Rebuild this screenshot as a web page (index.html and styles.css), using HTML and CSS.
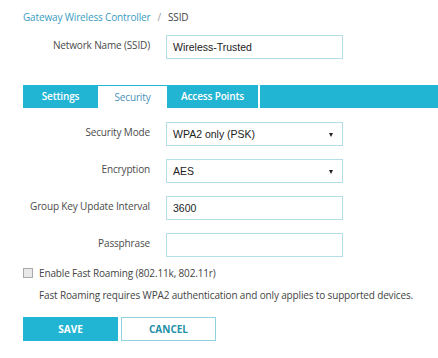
FILE: index.html
```html
<!DOCTYPE html>
<html>
<head>
<meta charset="utf-8">
<link rel="stylesheet" href="styles.css">
</head>
<body>
<div class="page">
  <div class="crumbs"><a class="crumb-link">Gateway Wireless Controller</a><span class="sep">/</span><span class="crumb-cur">SSID</span></div>
  <div class="row first">
    <label class="lbl">Network Name (SSID)</label>
    <div class="field">Wireless-Trusted</div>
  </div>
  <div class="tabs">
    <div class="tab">Settings</div>
    <div class="tab active">Security</div>
    <div class="tab">Access Points</div>
    <div class="tab-fill"></div>
  </div>
  <div class="rows">
    <div class="row">
      <label class="lbl">Security Mode</label>
      <div class="field select">WPA2 only (PSK)<span class="caret"></span></div>
    </div>
    <div class="row">
      <label class="lbl">Encryption</label>
      <div class="field select">AES<span class="caret"></span></div>
    </div>
    <div class="row">
      <label class="lbl">Group Key Update Interval</label>
      <div class="field">3600</div>
    </div>
    <div class="row">
      <label class="lbl">Passphrase</label>
      <div class="field"></div>
    </div>
  </div>
  <div class="check">
    <span class="box"></span>
    <span>Enable Fast Roaming (802.11k, 802.11r)</span>
  </div>
  <div class="note">Fast Roaming requires WPA2 authentication and only applies to supported devices.</div>
  <div class="buttons">
    <div class="btn save">SAVE</div>
    <div class="btn cancel">CANCEL</div>
  </div>
</div>
</body>
</html>
```
FILE: styles.css
```css
html, body { margin: 0; padding: 0; background: #fff; }
body { font-family: "Open Sans", "Noto Sans", sans-serif; font-size: 10px; letter-spacing: -0.15px; color: #444; }
.page { padding: 9px 0 0 23px; }
.crumbs { height: 16px; line-height: 16px; }
.crumb-link { color: #3a9cc0; }
.sep { color: #999; margin: 0 7px; }
.crumb-cur { color: #444; }
.row { display: flex; align-items: center; height: 24px; }
.row.first { margin-top: 10px; }
.lbl { width: 127px; text-align: right; margin-right: 16px; color: #4a4a4a; line-height: 16px; margin-top: -4px; white-space: nowrap; }
.field { box-sizing: border-box; width: 177px; height: 24px; border: 1px solid #b4dee6; font-family: "Liberation Sans", Arial, sans-serif; font-size: 10.5px; letter-spacing: 0; color: #222; padding-left: 6px; line-height: 22px; position: relative; }
.caret { position: absolute; right: 9px; top: 10px; width: 0; height: 0; border-left: 2.5px solid transparent; border-right: 2.5px solid transparent; border-top: 4px solid #222; }
.tabs { display: flex; height: 23px; margin-top: 26px; }
.tab { background: #22b4d3; color: #fff; font-weight: 600; line-height: 23px; text-align: center; }
.tab:nth-child(1) { width: 75px; }
.tab:nth-child(2) { width: 69px; }
.tab:nth-child(3) { width: 91px; margin-right: 2px; }
.tab.active { background: #fff; color: #4a90b8; font-weight: 400; border-top: 1px solid #22b4d3; line-height: 22px; box-sizing: border-box; }
.tab-fill { flex: 1; background: #22b4d3; }
.rows { margin-top: 14px; display: flex; flex-direction: column; gap: 13px; }
.check { display: flex; align-items: center; margin-top: 9px; height: 14px; color: #444; }
.box { box-sizing: border-box; width: 10px; height: 10px; border: 1px solid #aaa; background: #e8e8e8; margin-right: 6px; }
.note { margin-top: 8px; line-height: 14px; padding-left: 16px; color: #444; }
.buttons { display: flex; gap: 3px; margin-top: 15px; }
.btn { box-sizing: border-box; width: 95px; height: 24px; line-height: 22px; text-align: center; font-weight: 700; font-size: 10px; letter-spacing: 0; }
.save { background: #22b4d3; color: #fff; border: 1px solid #22b4d3; }
.cancel { border: 1px solid #8fd3e2; color: #1f8fa8; }
```
